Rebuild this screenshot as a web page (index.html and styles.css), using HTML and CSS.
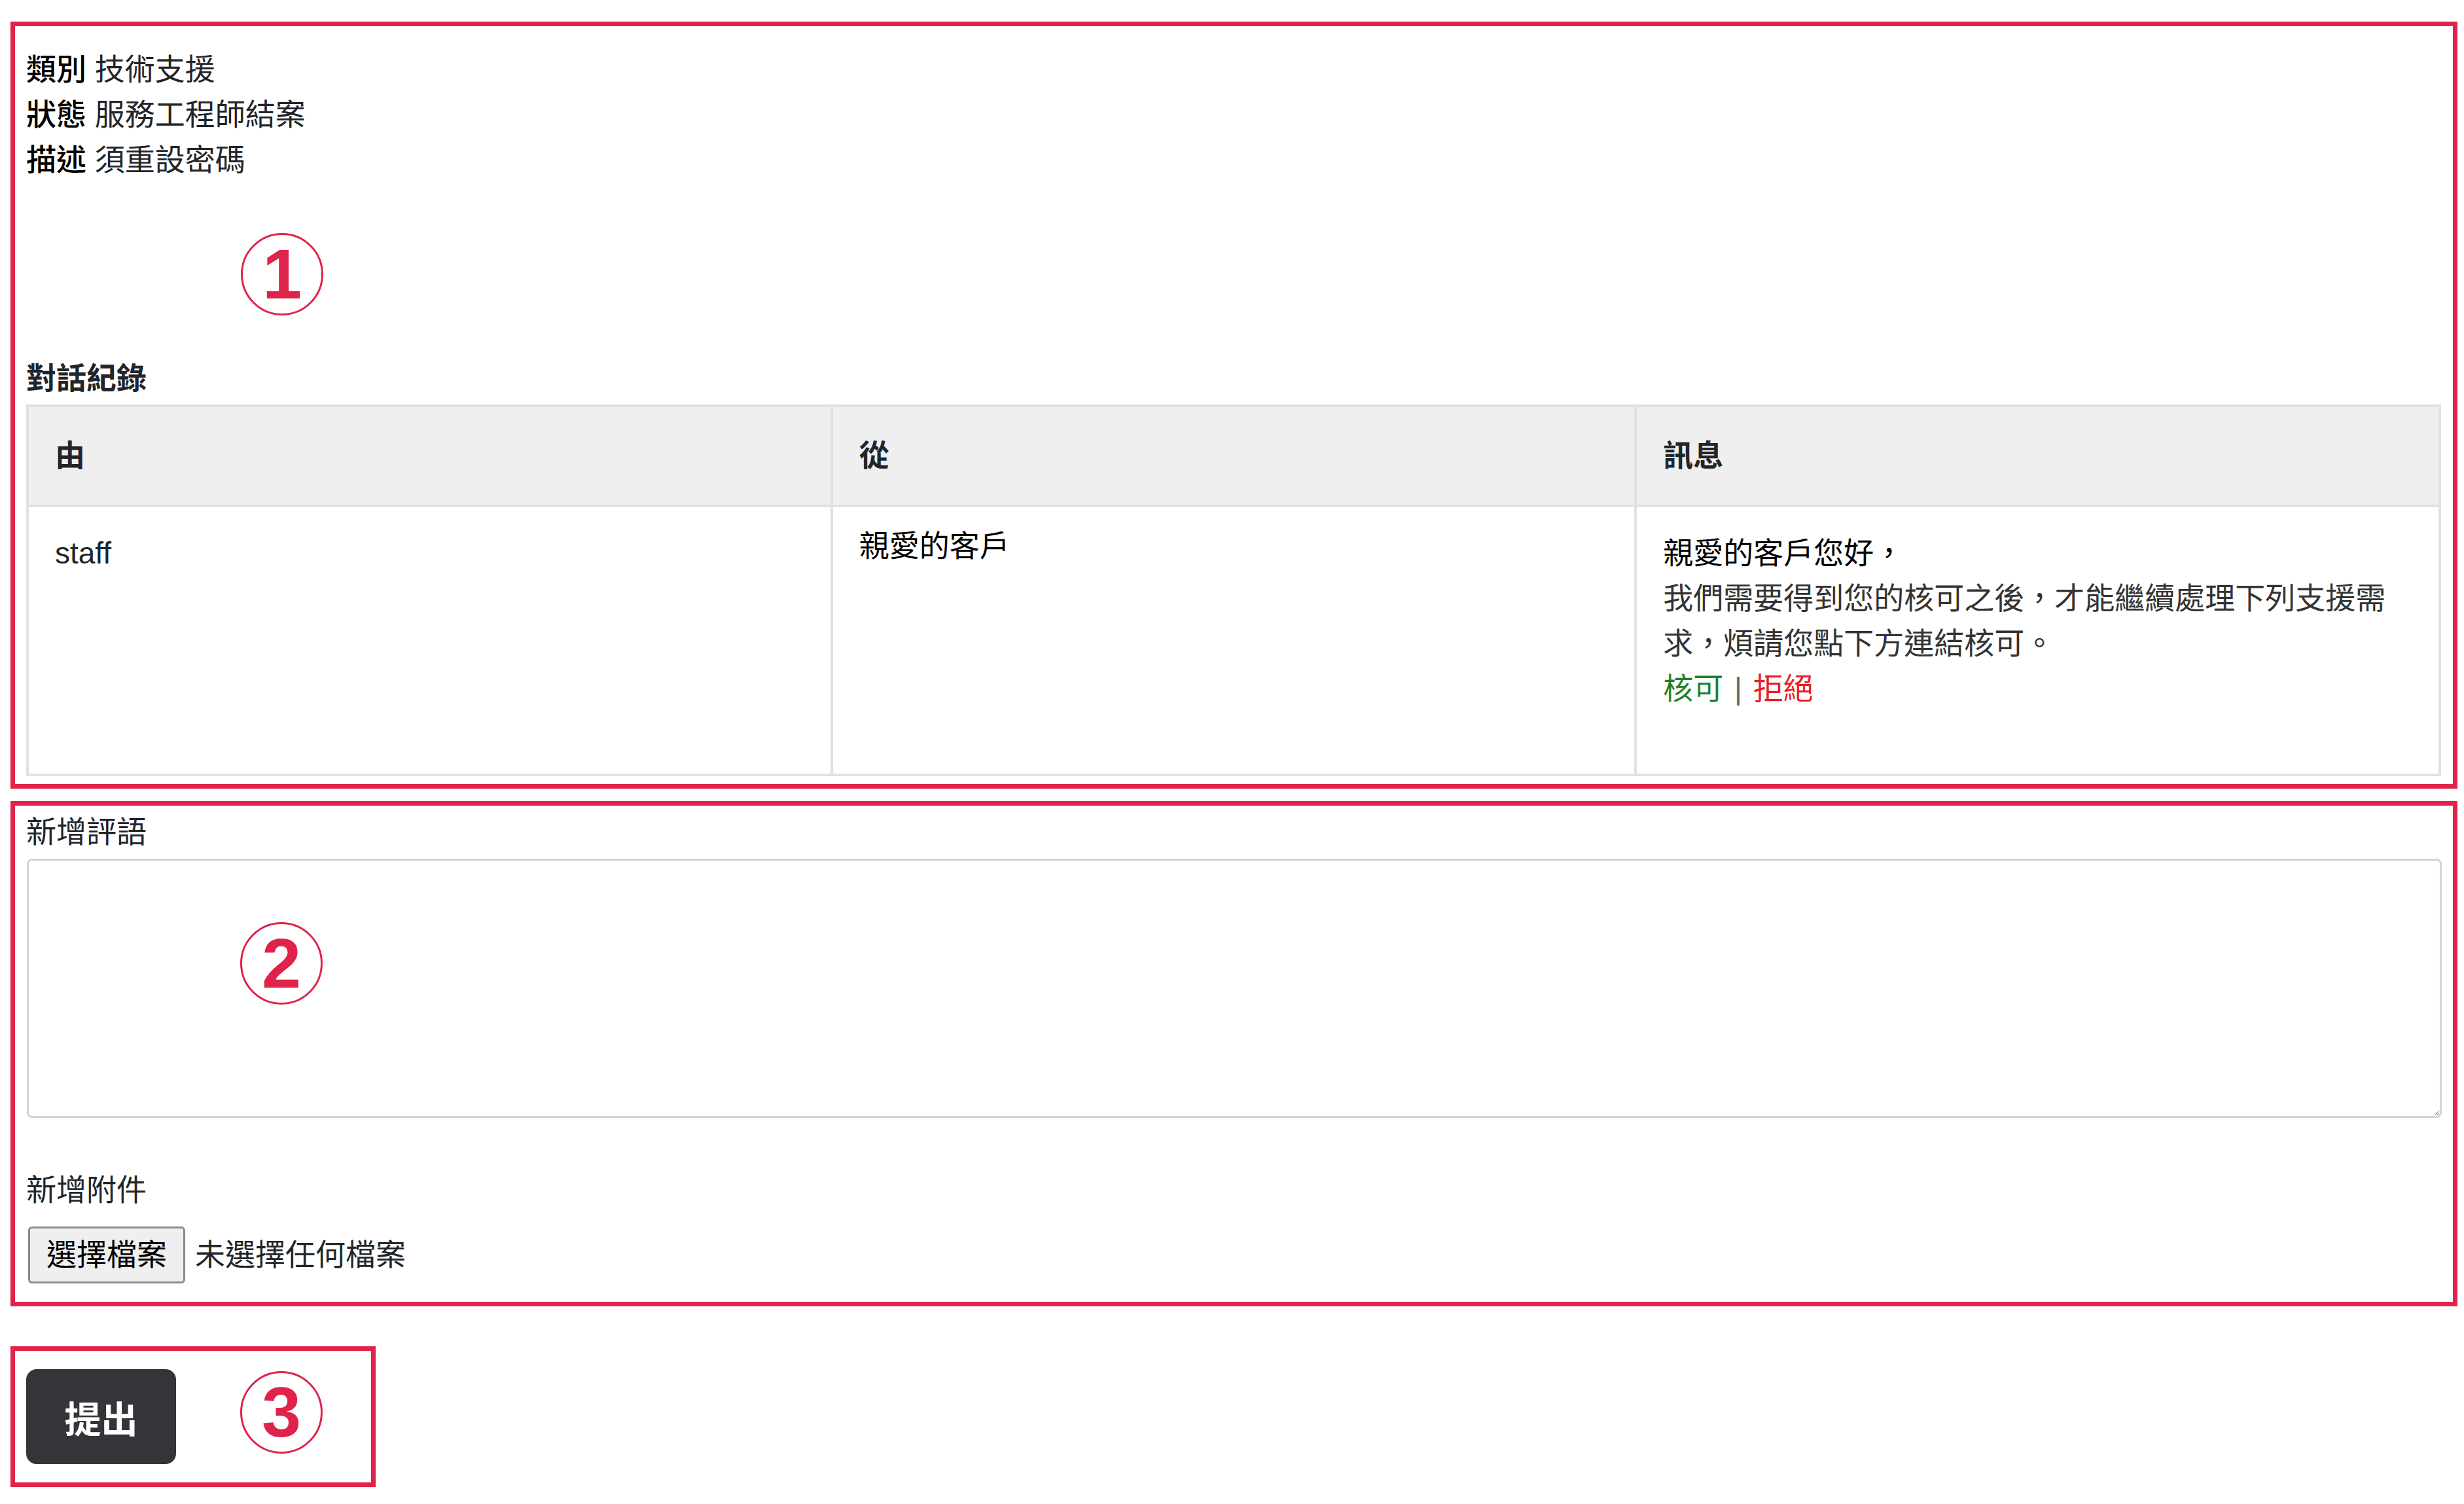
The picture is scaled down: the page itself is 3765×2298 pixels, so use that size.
FILE: index.html
```html
<!DOCTYPE html>
<html lang="zh-Hant">
<head>
    <meta charset="UTF-8">
    <meta name="viewport" content="width=device-width, initial-scale=1.0">
    <title>支援需求</title>
    <link rel="stylesheet" href="styles.css">
</head>
<body>
    <section class="panel panel-ticket">
        <dl class="ticket-meta">
            <div><dt>類別</dt> <dd>技術支援</dd></div>
            <div><dt>狀態</dt> <dd>服務工程師結案</dd></div>
            <div><dt>描述</dt> <dd>須重設密碼</dd></div>
        </dl>

        <span class="marker marker-one">1</span>

        <h4 class="log-title">對話紀錄</h4>
        <table class="log-table">
            <thead>
                <tr>
                    <th>由</th>
                    <th>從</th>
                    <th>訊息</th>
                </tr>
            </thead>
            <tbody>
                <tr>
                    <td class="log-by">staff</td>
                    <td class="log-from">親愛的客戶</td>
                    <td class="log-msg">
                        <p class="msg-greeting">親愛的客戶您好，</p>
                        <p>我們需要得到您的核可之後，才能繼續處理下列支援需求，煩請您點下方連結核可。</p>
                        <p class="msg-actions">
                            <a href="#" class="approve">核可</a>
                            <span class="sep">|</span>
                            <a href="#" class="reject">拒絕</a>
                        </p>
                    </td>
                </tr>
            </tbody>
        </table>
    </section>

    <section class="panel panel-reply">
        <label for="comment" class="field-label">新增評語</label>
        <textarea id="comment" name="comment"></textarea>

        <label class="field-label attach-label">新增附件</label>
        <div class="file-field">
            <button type="button" class="file-btn">選擇檔案</button>
            <span class="file-name">未選擇任何檔案</span>
        </div>

        <span class="marker marker-two">2</span>
    </section>

    <section class="panel panel-submit">
        <button type="submit" class="submit-btn">提出</button>
        <span class="marker marker-three">3</span>
    </section>
</body>
</html>
```

FILE: styles.css
```css
body {
    margin: 0;
    padding: 33px 10px 20px 16px;
    background: #fff;
    color: #212529;
    font-family: "Liberation Sans", "Noto Sans CJK TC", sans-serif;
    font-size: 46px;
    line-height: 69px;
}

.panel {
    position: relative;
    border: 7px solid #e0234a;
    padding: 0 18px 0 17px;
}

.panel-ticket {
    padding-top: 32px;
    padding-bottom: 12px;
}

.panel-reply {
    margin-top: 19px;
    padding-top: 6px;
    padding-bottom: 28px;
}

.panel-submit {
    margin-top: 61px;
    width: 558px;
    box-sizing: border-box;
    padding-top: 28px;
    padding-bottom: 28px;
}

/* annotation circles */
.marker {
    position: absolute;
    width: 126px;
    height: 126px;
    box-sizing: border-box;
    border: 3px solid #e0234a;
    border-radius: 50%;
    color: #e0234a;
    font-family: "Liberation Sans", sans-serif;
    font-weight: bold;
    font-size: 108px;
    line-height: 1;
    display: flex;
    align-items: center;
    justify-content: center;
}

.marker-one {
    left: 345px;
    top: 316px;
}

.marker-two {
    left: 344px;
    top: 178px;
}

.marker-three {
    left: 344px;
    top: 31px;
}

.ticket-meta {
    margin: 0;
}

.ticket-meta dt,
.ticket-meta dd {
    display: inline;
    margin: 0;
}

.ticket-meta dt {
    font-weight: 500;
    color: #000;
}

.log-title {
    margin: 265px 0 5px;
    font-size: 46px;
    font-weight: bold;
}

.log-table {
    width: 100%;
    border-collapse: collapse;
    table-layout: fixed;
}

.log-table th,
.log-table td {
    border: 4px solid #dee2e6;
    padding: 40px 42px 40px 40px;
    text-align: left;
    vertical-align: top;
}

.log-table th {
    background: #efefef;
    font-weight: bold;
}

.log-table td {
    padding-top: 36px;
}

.log-table td.log-from {
    padding-top: 25px;
    color: #000;
}

.log-msg p {
    margin: 0;
    color: #333;
}

.log-msg .msg-greeting {
    color: #000;
}

.log-msg .msg-actions {
    margin-bottom: 55px;
}

.msg-actions a {
    text-decoration: none;
}

.msg-actions .approve {
    color: #24802a;
}

.msg-actions .reject {
    color: #ec1c24;
}

.msg-actions .sep {
    color: #666;
    margin: 0 4px;
}

.field-label {
    display: block;
    margin-bottom: 6px;
}

.attach-label {
    margin-top: 76px;
    margin-bottom: 21px;
}

textarea {
    display: block;
    width: 100%;
    height: 396px;
    box-sizing: border-box;
    margin-left: 1px;
    border: 3px solid #ced4da;
    border-radius: 8px;
    font: inherit;
    resize: vertical;
}

.file-field {
    display: flex;
    align-items: center;
    margin-left: 3px;
}

.file-btn {
    height: 87px;
    padding: 0 25px;
    background: #efefef;
    border: 3px solid #8a8a8a;
    border-radius: 6px;
    font: inherit;
    color: #000;
}

.file-name {
    margin-left: 15px;
}

.submit-btn {
    display: block;
    width: 229px;
    height: 145px;
    background: #343439;
    color: #fff;
    border: none;
    border-radius: 16px;
    font-family: inherit;
    font-size: 56px;
    font-weight: bold;
}
```
